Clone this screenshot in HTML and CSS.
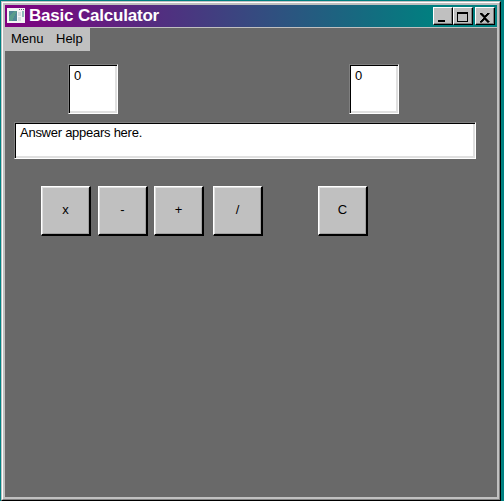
FILE: index.html
```html
<!DOCTYPE html>
<html lang="en">
<head>
<meta charset="utf-8">
<title>Basic Calculator</title>
<link rel="stylesheet" href="styles.css">
</head>
<body>
<div class="window">
  <div class="frame">
    <header class="titlebar">
      <svg class="app-icon" width="18" height="15" viewBox="0 0 18 15" shape-rendering="crispEdges">
        <rect width="18" height="15" fill="#f4f4f4"/>
        <rect x="2" y="3" width="8" height="10" fill="#4f8795"/>
        <path d="M2 13V8l5-5h3L5 13z" fill="#5a9c8b"/>
        <rect x="11" y="4" width="3" height="4" fill="#d4dde0"/>
        <rect x="11" y="9" width="3" height="4" fill="#d4dde0"/>
        <rect x="15" y="3" width="2" height="6" fill="#8dbbb8"/>
        <path d="M12 1h1v1h-1zM14 1h1v1h-1zM16 1h1v1h-1z" fill="#667"/>
      </svg>
      <h1>Basic Calculator</h1>
      <div class="controls">
        <button class="control" aria-label="Minimize"><svg width="16" height="14" shape-rendering="crispEdges"><rect x="4" y="11" width="7" height="2"/></svg></button>
        <button class="control" aria-label="Maximize"><svg width="16" height="14" shape-rendering="crispEdges"><path fill-rule="evenodd" d="M3 3h11v10H3zM4 5v7h9V5z"/></svg></button>
        <button class="control close" aria-label="Close"><svg width="16" height="14" shape-rendering="crispEdges"><path d="M4 4h2v1h1v1h1v1h1V6h1V5h1V4h2v1h-1v1h-1v1h-1v1H9v1h1v1h1v1h1v1h1v1h-2v-1h-1v-1H9v-1H8v1H7v1H6v1H4v-1h1v-1h1v-1h1V9h1V8H7V7H6V6H5V5H4z" stroke="#000" stroke-width=".6"/></svg></button>
      </div>
    </header>
    <nav class="menu"><span class="menu-item">Menu</span><span class="menu-item">Help</span></nav>
    <main>
      <div class="inputs">
        <div class="field number">0</div>
        <div class="field number">0</div>
      </div>
      <div class="field answer">Answer appears here.</div>
      <div class="keys">
        <button class="key">x</button>
        <button class="key minus">-</button>
        <button class="key plus">+</button>
        <button class="key divide">/</button>
        <button class="key clear">C</button>
      </div>
    </main>
  </div>
</div>
</body>
</html>
```
FILE: styles.css
```css
* { box-sizing: border-box; }
body {
  margin: 0;
  height: 501px;
  padding: 1px 3px 0 1px;
  background: #008080;
  font: 13px/16px "Liberation Sans", Arial, sans-serif;
  color: #000;
  overflow: hidden;
}
.window {
  height: 500px;
  border: 1px solid;
  border-color: #c0c0c0 #000 #000 #c0c0c0;
}
.frame {
  height: 498px;
  border: 1px solid;
  border-color: #fff #808080 #808080 #fff;
  background: #696969;
  box-shadow: inset 0 0 0 2px #c0c0c0;
  padding: 2px;
}
.titlebar {
  display: flex;
  align-items: center;
  height: 23px;
  padding: 0 2px;
  background: linear-gradient(90deg, #800080, #008080 430px);
  border-bottom: 1px solid #c0c0c0;
}
.app-icon { margin-top: -1px; }
h1 {
  margin: 0 0 0 4px;
  font-size: 17px;
  line-height: 22px;
  letter-spacing: -0.2px;
  color: #fff;
}
.controls { display: flex; margin-left: auto; }
.control {
  width: 20px;
  height: 18px;
  padding: 0;
  border: 1px solid;
  border-color: #fff #000 #000 #fff;
  box-shadow: inset -1px -1px #808080;
  background: #c0c0c0;
}
.control svg { display: block; }
.close { margin-left: 2px; }
.menu {
  display: flex;
  width: 85px;
  height: 23px;
  background: #c0c0c0;
  line-height: 22px;
}
.menu-item { padding-left: 6px; width: 45px; }
.menu-item + .menu-item { width: 40px; }
main { padding: 13px 21px 0 9px; }
.inputs { display: flex; justify-content: space-between; padding: 0 77px 0 54px; }
.field {
  border: 1px solid;
  border-color: #808080 #fff #fff #808080;
  background: #fff;
  box-shadow: inset 1px 1px #000, inset -2px -2px #e0e0e0;
  padding: 2px 5px;
}
.number { width: 50px; height: 50px; padding-top: 3px; }
.answer { height: 37px; margin-top: 8px; letter-spacing: -0.26px; }
.keys { display: flex; margin: 27px 0 0 27px; }
.key {
  width: 50px;
  height: 50px;
  padding: 0 0 1px;
  border: 1px solid;
  border-color: #fff #000 #000 #fff;
  border-width: 1px 2px 2px 1px;
  background: #c0c0c0;
  box-shadow: inset 1px 1px #e0e0e0, inset -1px -1px #a0a0a0;
  font: inherit;
}
.minus { margin-left: 7px; }
.plus { margin-left: 6px; }
.divide { margin-left: 9px; }
.clear { margin-left: 55px; }
```
